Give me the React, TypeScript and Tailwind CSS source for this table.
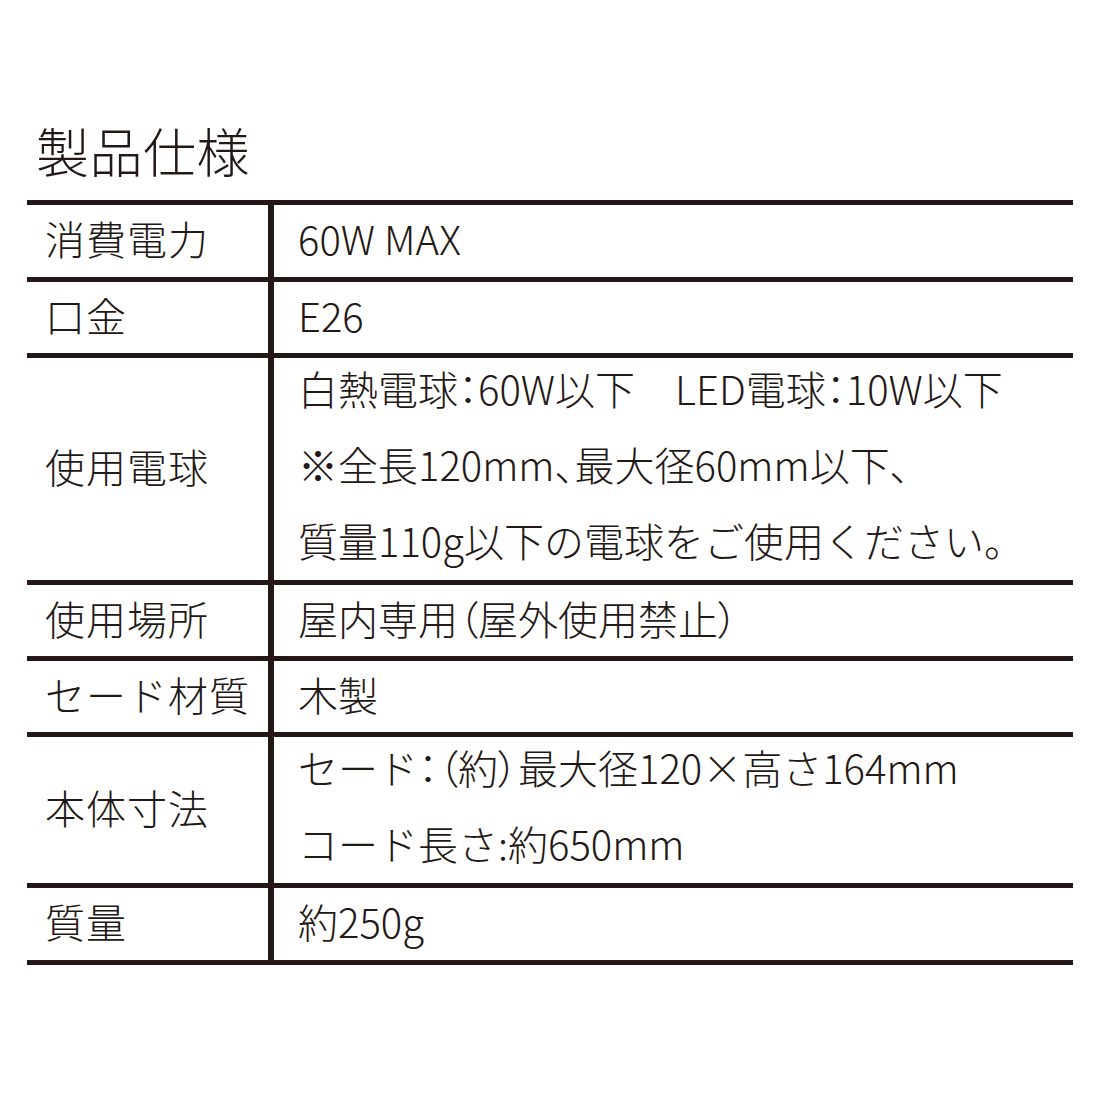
import type { ReactNode } from 'react';

// proportional punctuation (brackets, colons, comma) like the printed sheet
const P = ({ children }: { children: ReactNode }) => (
  <span className="[font-feature-settings:'palt']">{children}</span>
);

type Spec = {
  label: string;
  height: string;
  lines: ReactNode[];
};

const specs: Spec[] = [
  { label: '消費電力', height: 'h-[77px]', lines: ['60W MAX'] },
  { label: '口金', height: 'h-[76px]', lines: ['E26'] },
  {
    label: '使用電球',
    height: 'h-[227px]',
    lines: [
      <>
        白熱電球<P>：</P>60W以下　LED電球<P>：</P>10W以下
      </>,
      <>
        ※全長120mm<P>、</P>最大径60mm以下<P>、</P>
      </>,
      '質量110g以下の電球をご使用ください。',
    ],
  },
  {
    label: '使用場所',
    height: 'h-[76px]',
    lines: [
      <>
        屋内専用<P>（</P>屋外使用禁止<P>）</P>
      </>,
    ],
  },
  { label: 'セード材質', height: 'h-[76px]', lines: ['木製'] },
  {
    label: '本体寸法',
    height: 'h-[151px]',
    lines: [
      <>
        セード<P>：（</P>約<P>）</P>最大径120×高さ164mm
      </>,
      'コード長さ:約650mm',
    ],
  },
  { label: '質量', height: 'h-[77px]', lines: ['約250g'] },
];

export default function App() {
  return (
    <div className="w-[1100px] h-[1100px] bg-white text-[#231815] font-light font-['Noto_Sans_CJK_JP','Noto_Sans',sans-serif]">
      <div className="px-[36px] pt-[124px] pb-[24px]">
        <h1 className="text-[53px] leading-[52px] tracking-[0.5px] font-light">製品仕様</h1>
      </div>

      <div className="mx-[27px] border-b-[5px] border-[#231815]">
        {specs.map((s) => {
          const multi = s.lines.length > 1;
          return (
            <div
              key={s.label}
              className={`grid grid-cols-[241px_1fr] grid-rows-[minmax(0,1fr)] border-t-[5px] border-[#231815] ${s.height}`}
            >
              <div className="flex items-center min-h-0 pl-[18px] pb-[6px] text-[40px] tracking-[1px] leading-none">
                {s.label}
              </div>
              <div
                className={`flex flex-col justify-center min-h-0 border-l-[6px] border-[#231815] pl-[24px] text-[40px] ${multi ? 'pb-[10px]' : 'pb-[6px]'}`}
              >
                {s.lines.map((line, i) => (
                  <div key={i} className={multi ? 'leading-[76px] shrink-0' : 'leading-none'}>
                    {line}
                  </div>
                ))}
              </div>
            </div>
          );
        })}
      </div>
    </div>
  );
}
